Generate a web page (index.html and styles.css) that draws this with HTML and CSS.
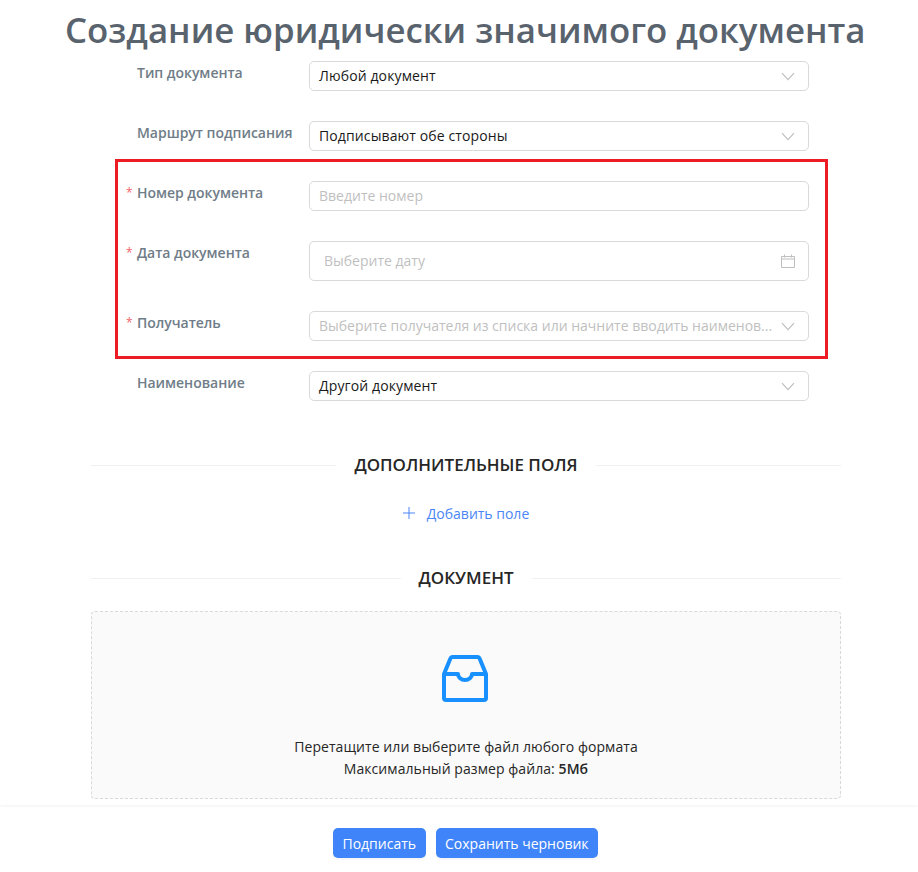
FILE: index.html
```html
<!DOCTYPE html>
<html lang="ru">
<head>
<meta charset="utf-8">
<title>Создание юридически значимого документа</title>
<link rel="stylesheet" href="styles.css">
</head>
<body>
<div class="app">
  <main class="main">
    <h1 class="title">Создание юридически значимого документа</h1>
    <form class="form">
      <div class="row">
        <label class="label">Тип документа</label>
        <div class="control"><span class="value">Любой документ</span>
          <svg class="chevron" viewBox="0 0 14 9"><path d="M1 1.2 7 7.6l6-6.4"/></svg></div>
      </div>
      <div class="row">
        <label class="label">Маршрут подписания</label>
        <div class="control"><span class="value">Подписывают обе стороны</span>
          <svg class="chevron" viewBox="0 0 14 9"><path d="M1 1.2 7 7.6l6-6.4"/></svg></div>
      </div>
      <div class="row">
        <label class="label required">Номер документа</label>
        <div class="control"><span class="placeholder">Введите номер</span></div>
      </div>
      <div class="row">
        <label class="label required">Дата документа</label>
        <div class="control control-date"><span class="placeholder">Выберите дату</span>
          <svg class="calendar" viewBox="0 0 14 14"><path d="M.5 2.500h13v11H.5zM.5 5h13M3.500.5v3M10.500.5v3"/></svg></div>
      </div>
      <div class="row">
        <label class="label required">Получатель</label>
        <div class="control"><span class="placeholder nowrap">Выберите получателя из списка или начните вводить наименов...</span>
          <svg class="chevron" viewBox="0 0 14 9"><path d="M1 1.2 7 7.6l6-6.4"/></svg></div>
      </div>
      <div class="row">
        <label class="label">Наименование</label>
        <div class="control"><span class="value">Другой документ</span>
          <svg class="chevron" viewBox="0 0 14 9"><path d="M1 1.2 7 7.6l6-6.4"/></svg></div>
      </div>
      <div class="highlight"></div>
    </form>

    <div class="divider divider-extra"><span>ДОПОЛНИТЕЛЬНЫЕ ПОЛЯ</span></div>
    <div class="add-field">
      <svg class="plus" viewBox="0 0 12 12"><path d="M6 0v12M0 6h12"/></svg>
      <span>Добавить поле</span>
    </div>
    <div class="divider divider-doc"><span>ДОКУМЕНТ</span></div>

    <div class="dropzone">
      <svg class="inbox" viewBox="0 0 48 48"><path d="M2 20v24a2 2 0 0 0 2 2h38a2 2 0 0 0 2-2V20L37.500 4.300A2 2 0 0 0 35.700 3H10.300A2 2 0 0 0 8.500 4.300ZM2 20H16a7 6 0 0 0 14 0H44"/></svg>
      <p class="drop-text">Перетащите или выберите файл любого формата</p>
      <p class="drop-text">Максимальный размер файла: <b class="size">5Мб</b></p>
    </div>
  </main>
  <footer class="footer">
    <button class="btn" type="button">Подписать</button>
    <button class="btn" type="button">Сохранить черновик</button>
  </footer>
</div>
</body>
</html>
```
FILE: styles.css
```css
* { box-sizing: border-box; }
html, body { margin: 0; height: 100%; background: #fff; }
body { font-family: "Open Sans", "Noto Sans", sans-serif; font-size: 14px; color: #1a1a1a; overflow: hidden; }
.app { height: 872px; display: flex; flex-direction: column; }
.main { flex: 1; min-height: 0; padding: 0 77px 0 91px; display: flex; flex-direction: column; overflow: hidden; }
.title { margin: 0 0 0 -26px; width: 800px; height: 61px; line-height: 59px; font-size: 34.8px; font-weight: 600; color: #59636e; white-space: nowrap; text-align: center; }
.form { position: relative; display: flex; flex-direction: column; gap: 30px; }
.row { display: flex; }
.label { position: relative; width: 218px; padding-left: 46px; line-height: 24px; font-weight: 600; font-size: 14px; letter-spacing: -.03px; color: #6f7d88; white-space: nowrap; }
.required::before { content: "*"; position: absolute; left: 35px; top: 0; font-size: 12px; color: #f5626a; font-weight: 400; }
.control { width: 500px; height: 30px; border: 1px solid #d9d9d9; border-radius: 5px; background: #fff; display: flex; align-items: center; padding: 0 13px 0 9px; line-height: 26px; }
.control-date { height: 40px; padding-left: 14px; padding-right: 13px; }
.value { flex: 1; color: #1a1a1a; letter-spacing: .12px; }
.placeholder { flex: 1; color: #bfbfbf; min-width: 0; }
.nowrap { white-space: nowrap; }
.chevron { width: 14px; height: 9px; flex: none; fill: none; stroke: #bfbfbf; stroke-width: 1.2; }
.calendar { width: 14px; height: 14px; flex: none; fill: none; stroke: #bfbfbf; stroke-width: 1; }
.highlight { position: absolute; left: 24px; top: 98px; width: 713px; height: 200px; border: 3px solid #ed1c24; pointer-events: none; }
.divider { display: flex; align-items: center; gap: 18px; font-size: 17px; font-weight: 600; color: #262626; line-height: 24px; }
.divider::before, .divider::after { content: ""; flex: 1; height: 1px; background: #f0f0f0; }
.divider-extra { margin-top: 52px; }
.divider-doc { margin-top: 41px; }
.add-field { margin-top: 24px; height: 24px; display: flex; align-items: center; justify-content: center; gap: 12px; color: #4a86f7; }
.plus { width: 12px; height: 12px; fill: none; stroke: #4a86f7; stroke-width: 1; }
.dropzone { margin-top: 21px; height: 188px; flex: none; border: 1px dashed #d9d9d9; border-radius: 4px; background: #fafafa; display: flex; flex-direction: column; align-items: center; padding-top: 42px; }
.inbox { width: 48px; height: 48px; fill: none; stroke: #1890ff; stroke-width: 4; stroke-linejoin: round; margin-bottom: 34px; }
.drop-text { margin: 0; line-height: 22px; color: #262626; letter-spacing: .07px; }
.size { font-weight: 600; }
.footer { height: 65px; flex: none; display: flex; justify-content: center; gap: 10px; padding: 21px 0 0 13px; background: #fff; box-shadow: 0 -1px 3px rgba(0,0,0,.06); position: relative; }
.btn { height: 30px; padding: 0 9.5px; border: 0; border-radius: 5px; background: #3f84f8; color: #fff; font: 14px "Open Sans", "Noto Sans", sans-serif; box-shadow: 0 2px 2px rgba(0,0,0,.04); }
```
